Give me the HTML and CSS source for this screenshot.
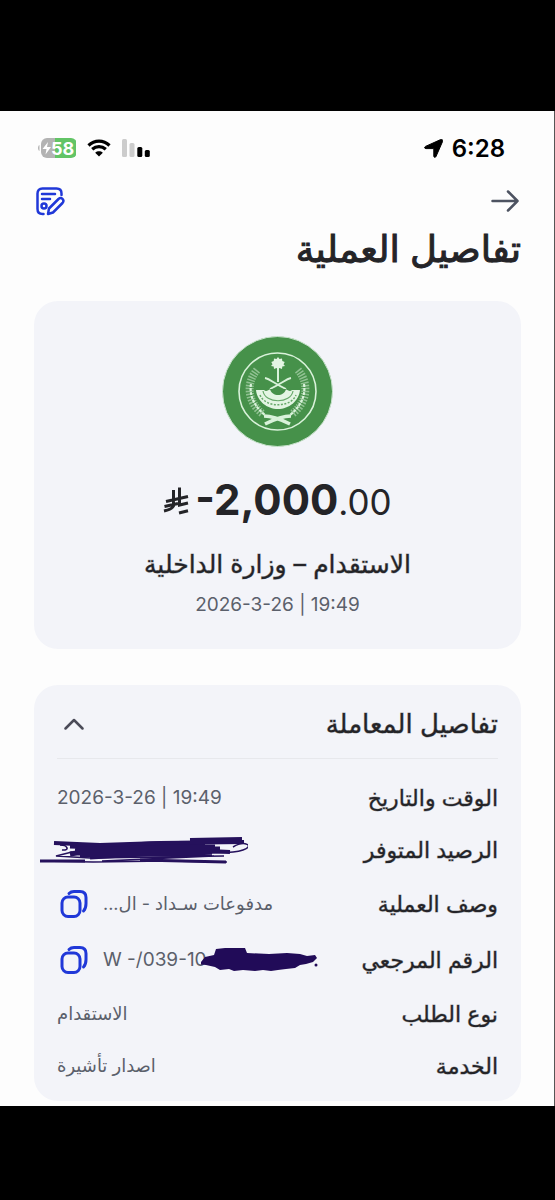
FILE: index.html
```html
<!DOCTYPE html>
<html lang="ar" dir="rtl">
<head>
<meta charset="utf-8">
<meta name="viewport" content="width=device-width, initial-scale=1">
<title>تفاصيل العملية</title>
<link rel="stylesheet" href="styles.css">
</head>
<body>
<svg class="defs" aria-hidden="true">
  <symbol id="copy" viewBox="0 0 28 28">
    <rect x="2" y="7" width="18" height="19.500" rx="6"/>
    <path d="M9 3.5C10.5 2 12 1.500 14 1.500h6c4 0 6 2 6 6v6c0 3-.5 5.500-2.500 7.500"/>
  </symbol>
</svg>
<main class="screen">
  <div class="status" dir="ltr">
    <div class="status-group">
      <svg class="battery" viewBox="0 0 38 20" role="img" aria-label="58">
        <defs><clipPath id="cell"><rect x="3" y="0" width="36" height="20" rx="6"/></clipPath></defs>
        <path d="M1.500 7v6C.3 12.500 0 11 0 10s.3-2.500 1.500-3z" fill="#b5b5b5"/>
        <g clip-path="url(#cell)"><rect x="3" width="16" height="20" fill="#b3b3b3"/><rect x="17" width="22" height="20" fill="#62c466"/></g>
        <path d="M10 4 4.500 11H8.500l-1 5.500 5.500-7.500H9z" fill="#fff"/>
        <text x="13" y="16.500" class="battery-text">58</text>
      </svg>
      <svg class="wifi" viewBox="0 0 24 18" aria-hidden="true">
        <path d="M1.500 6.500C7.500.7 16.500.7 22.500 6.500M5.200 10.300c4-3.600 9.600-3.600 13.600 0" fill="none" stroke="#000" stroke-width="3.200"/>
        <path d="M12 17.500 8.200 13.700c2.200-1.900 5.400-1.900 7.600 0z"/>
      </svg>
      <svg class="signal" viewBox="0 0 28 18" aria-hidden="true">
        <rect width="5" height="18" rx="1.500" fill="#ccc"/><rect x="7.500" y="4" width="5" height="14" rx="1.500" fill="#ccc"/>
        <rect x="15.300" y="8" width="5" height="10" rx="1.500"/><rect x="22.800" y="11" width="5" height="7" rx="1.500"/>
      </svg>
    </div>
    <div class="status-group status-time">
      <svg class="locator" viewBox="0 0 19 19" aria-hidden="true"><path d="M18.300.7c.5.4.6 1 .3 1.700L12 17.500c-.6 1.300-2.200 1.100-2.200-.4V9.600H1.900C.4 9.600.2 8 1.500 7.400L16.600.6c.7-.3 1.300-.3 1.700.1z" stroke="#000"/></svg>
      <time>6:28</time>
    </div>
  </div>

  <nav class="toolbar">
    <button class="icon-button" type="button" aria-label="رجوع">
      <svg class="arrow" viewBox="0 0 28 22"><path d="M1.500 11h25M17 1.500l9.500 9.500-9.500 9.500"/></svg>
    </button>
    <button class="icon-button" type="button" aria-label="تعديل">
      <svg class="edit" viewBox="0 0 29 29">
        <path d="M7.500 27H6.500c-3.500 0-5-1.800-5-5V6.500c0-3.300 1.700-5 5-5h14c3.300 0 5 1.700 5 5V8M6 7h13M6 12h8"/>
        <circle cx="8" cy="19" r="2.500"/>
        <path d="M12 27l1-5.500L22.500 12c2.800-2.500 6.500 1 4 4L17 25.500z"/>
      </svg>
    </button>
  </nav>
  <h1 class="title">تفاصيل العملية</h1>

  <section class="card summary">
    <svg class="emblem" viewBox="0 0 111 111" role="img" aria-label="وزارة الداخلية">
      <circle cx="55.500" cy="55.500" r="55" fill="#46914a" stroke="#c9e3cd"/>
      <g fill="none" stroke="#d9f2da">
        <circle cx="55.500" cy="55.500" r="38.500" stroke-width="1.600"/>
        <path d="M56 29v17" stroke-width="2"/>
        <path d="M43 42c5 1 10 6 21 11M69 42c-5 1-10 6-21 11" stroke-width="1.800"/>
        <path d="M35 34c-12 14-9 33 6 44M76 34c12 14 9 33-6 44" stroke-width="8" stroke-dasharray="1.500 1.300" opacity=".5"/>
        <path d="M29 48c-2 12 4 23 14 31M82 48c2 12-4 23-14 31" stroke-width="2.200" stroke-dasharray="3 1"/>
        <path d="M42 80c8 0 16 3 26 8M69 80c-8 0-16 3-26 8" stroke-width="3.500"/>
      </g>
      <g fill="#e3f5e3">
        <path d="M34 54h8c3 3 6-2 9-1 3 2 7 2 10 0 3-1 6 4 9 1h8c-1 11-11 19-22 19s-21-8-22-19z"/>
        <path d="M56 21l1.500 2 2.500-.5.300 2.500 2.400 1-1.200 2.200L63 30l-2.700.5-.3 2.500-2.500-1-1.500 1-1.500-1-2.500 1-.3-2.500-2.700-.5 1.500-1.800-1.200-2.200 2.400-1 .3-2.500 2.500.500z"/>
      </g>
      <path d="M48 53c2 8 14 8 16 0z" fill="#46914a"/>
      <g fill="none" stroke="#67a96a">
        <path d="M41 55c2 13 28 13 30 0" stroke-width="1.200"/>
        <path d="M38 59c5 13 31 13 36 0" stroke-width="1.500" stroke-dasharray="2 1.500"/>
      </g>
    </svg>
    <p class="amount" dir="ltr">
      <svg class="riyal" viewBox="0 0 26 29" role="img" aria-label="ريال"><path d="M10.500 4v16c-1 2.500-3 3.500-9.500 5M16.500 1.500V19L25 17M3 15.500 25 10.500M1.500 20.500 15 17.500M16 27l9-2.300"/></svg>
      <span class="whole">-2,000</span><span class="cents">.00</span>
    </p>
    <h2 class="merchant">الاستقدام – وزارة الداخلية</h2>
    <time class="date" dir="ltr">2026-3-26 | 19:49</time>
  </section>

  <section class="card details">
    <header class="details-head">
      <h2 class="details-title">تفاصيل المعاملة</h2>
      <button class="icon-button toggle" type="button" aria-label="طي" aria-expanded="true">
        <svg class="chevron" viewBox="0 0 20 12"><path d="M1.500 10.500 10 2l8.500 8.500"/></svg>
      </button>
    </header>
    <dl class="rows">
      <div class="row"><dt>الوقت والتاريخ</dt><dd class="numeric" dir="ltr">2026-3-26 | 19:49</dd></div>
      <div class="row"><dt>الرصيد المتوفر</dt><dd class="hidden-value">
        <svg class="scribble-wide" viewBox="0 0 208 28" aria-hidden="true">
          <path d="M30 9 60 10 110 7 165 6M30 17 70 11 130 10 175 10M35 13 70 14 120 12 180 12M40 18 80 18 140 16 172 15M50 20 100 17 150 17 172 17" fill="none" stroke-width="5"/>
          <path d="M14 6 60 8 120 6 204 5M150 3l52-1M170 14l20 1" fill="none" stroke-width="4"/>
          <path d="M20 8c8 0 10 6 2 5M193 10c12-7 22-1 10 3-12 4-24 2-35 3M32 15 16 19l34 2 134-2M62 24l112-5M0 24l53 1 73-1 61 1" fill="none" stroke-width="1.500"/>
          <path d="M0 24h45M100 23l86 2" fill="none" stroke-width="3"/>
        </svg></dd></div>
      <div class="row row-copy"><dt>وصف العملية</dt><dd class="copy-value"><span>مدفوعات سـداد - ال...</span><button class="icon-button" type="button" aria-label="نسخ وصف العملية"><svg class="copy"><use href="#copy"/></svg></button></dd></div>
      <div class="row row-copy"><dt>الرقم المرجعي</dt><dd class="copy-value"><span class="reference numeric" dir="ltr">W -/039-10
        <svg class="scribble-short" viewBox="0 0 118 24" aria-hidden="true"><path d="M0 14l4-5 9-2 2-6 9-1h20l2 5 22 1 18-1 13 1 7 2 8-1 2 3-4 4-7 2-6 1-5 3-9 1-8 1-7 1-8-1-8 1-12-1-9 1-5-2-9 1-5-3-9-2-8-1z"/><circle cx="115" cy="17" r="1.500"/></svg></span><button class="icon-button" type="button" aria-label="نسخ الرقم المرجعي"><svg class="copy"><use href="#copy"/></svg></button></dd></div>
      <div class="row"><dt>نوع الطلب</dt><dd>الاستقدام</dd></div>
      <div class="row"><dt>الخدمة</dt><dd>اصدار تأشيرة</dd></div>
    </dl>
  </section>
</main>
</body>
</html>
```
FILE: styles.css
```css
* { box-sizing: border-box; }
body {
  margin: 0;
  padding: 111px 0 94px;
  background: #000;
  color: #242428;
  font-family: Inter, "DejaVu Sans", sans-serif;
}
h1, h2, p, dl, dd { margin: 0; }
svg { display: block; }
.defs { position: absolute; width: 0; height: 0; }
.screen {
  padding: 20px 33px 5px 34px;
  background: #fdfdfd;
  border-right: 1px solid #555;
}
.status {
  display: flex;
  justify-content: space-between;
  align-items: center;
  height: 34px;
  padding: 0 16px 0 4px;
  color: #000;
}
.status-group { display: flex; align-items: center; gap: 11px; }
.status-time { gap: 9px; font-size: 24px; font-weight: 600; }
.battery { width: 38px; height: 20px; }
.battery-text { font-size: 18px; font-weight: 700; fill: #fff; }
.wifi { width: 24px; height: 18px; }
.signal { width: 28px; height: 18px; }
.locator { width: 19px; height: 19px; }
.icon-button {
  display: grid;
  place-items: center;
  padding: 0;
  border: 0;
  background: none;
  cursor: pointer;
}
.icon-button svg { fill: none; stroke-linecap: round; stroke-linejoin: round; }
.toolbar {
  display: flex;
  justify-content: space-between;
  align-items: center;
  height: 40px;
  margin-top: 16px;
  padding: 0 2px;
}
.arrow { width: 28px; height: 22px; stroke: #4d5361; stroke-width: 2.5; }
.edit { width: 29px; height: 29px; stroke: #2038d8; stroke-width: 2.5; }
.title {
  height: 80px;
  font-size: 37px;
  line-height: 56px;
  font-weight: 400;
  -webkit-text-stroke: 1px #242428;
}
.card { border-radius: 24px; background: #f3f4f9; }
.summary {
  display: flex;
  flex-direction: column;
  align-items: center;
  height: 348px;
  padding-top: 35px;
}
.emblem { width: 111px; height: 111px; }
.amount { display: flex; align-items: baseline; margin-top: 25px; line-height: 56px; }
.riyal { width: 26px; height: 29px; margin-right: 6px; fill: none; stroke: #242428; stroke-width: 3; }
.whole { font-size: 42px; font-weight: 700; }
.cents { font-size: 35px; }
.merchant, .details-title, dt { font-weight: 400; -webkit-text-stroke: 1px rgb(36 36 40 / 40%); }
.merchant { margin-top: 14px; font-size: 25px; line-height: 40px; }
.date { margin-top: 6px; font-size: 19px; line-height: 30px; color: #5b606b; }
.details { margin-top: 36px; padding: 0 23px 20px; }
.details-head {
  display: flex;
  justify-content: space-between;
  align-items: center;
  height: 74px;
  padding-top: 4px;
  border-bottom: 1px solid #e7e8ec;
}
.details-title { font-size: 26px; line-height: 40px; }
.toggle { width: 34px; height: 34px; }
.chevron { width: 20px; height: 12px; stroke: #4b4b58; stroke-width: 2.5; }
.rows { display: grid; gap: 21px; padding-top: 23px; }
.row {
  display: flex;
  justify-content: space-between;
  align-items: center;
  height: 31px;
}
.row-copy { height: 35px; }
dt { font-size: 22px; }
dd { font-size: 18px; color: #5b606b; }
.numeric { font-size: 19px; }
.copy-value { display: flex; align-items: center; gap: 12px; }
.copy-value .icon-button { width: 34px; height: 34px; }
.copy { width: 28px; height: 28px; stroke: #2038d8; stroke-width: 3; }
.hidden-value, .reference { position: relative; }
.reference { padding-right: 112px; }
.scribble-wide {
  position: absolute;
  left: -17px;
  top: -13px;
  width: 208px;
  height: 28px;
  stroke: #25115c;
}
.scribble-short {
  position: absolute;
  right: 0;
  top: 0;
  width: 118px;
  height: 24px;
  fill: #210b58;
}
```
